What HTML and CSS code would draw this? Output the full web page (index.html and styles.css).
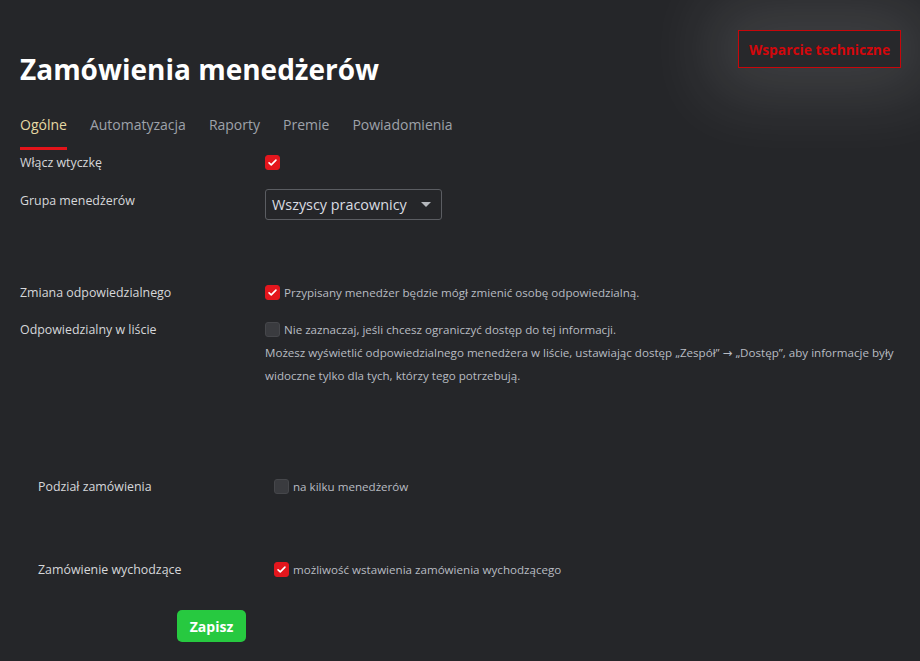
FILE: index.html
```html
<!DOCTYPE html>
<html lang="pl">
<head>
<meta charset="utf-8">
<title>Zamówienia menedżerów</title>
<link rel="stylesheet" href="styles.css">
</head>
<body>
<div class="page">
  <header class="header">
    <h1 class="title">Zamówienia menedżerów</h1>
    <a class="support" href="#">Wsparcie techniczne</a>
  </header>
  <nav class="tabs">
    <span class="tab active">Ogólne</span>
    <span class="tab">Automatyzacja</span>
    <span class="tab">Raporty</span>
    <span class="tab">Premie</span>
    <span class="tab">Powiadomienia</span>
  </nav>

  <div class="form main">
    <div class="row r1">
      <div class="label">Włącz wtyczkę</div>
      <div class="control"><span class="check on"><svg viewBox="0 0 16 16" width="11" height="11"><path d="M3 8.5l3.2 3L13 4.5" fill="none" stroke="#fff" stroke-width="2.4" stroke-linecap="round" stroke-linejoin="round"/></svg></span></div>
    </div>
    <div class="row r2">
      <div class="label">Grupa menedżerów</div>
      <div class="control"><div class="select"><span>Wszyscy pracownicy</span><span class="caret"></span></div></div>
    </div>
    <div class="row r3">
      <div class="label">Zmiana odpowiedzialnego</div>
      <div class="control desc"><label class="opt"><span class="check on"><svg viewBox="0 0 16 16" width="11" height="11"><path d="M3 8.5l3.2 3L13 4.5" fill="none" stroke="#fff" stroke-width="2.4" stroke-linecap="round" stroke-linejoin="round"/></svg></span>Przypisany menedżer będzie mógł zmienić osobę odpowiedzialną.</label></div>
    </div>
    <div class="row r4">
      <div class="label">Odpowiedzialny w liście</div>
      <div class="control desc">
        <label class="opt"><span class="check"></span>Nie zaznaczaj, jeśli chcesz ograniczyć dostęp do tej informacji.</label>
        <p class="note">Możesz wyświetlić odpowiedzialnego menedżera w liście, ustawiając dostęp „Zespół” → „Dostęp”, aby informacje były widoczne tylko dla tych, którzy tego potrzebują.</p>
      </div>
    </div>
  </div>

  <div class="form sub">
    <div class="row r5">
      <div class="label">Podział zamówienia</div>
      <div class="control desc"><label class="opt"><span class="check"></span>na kilku menedżerów</label></div>
    </div>
    <div class="row r6">
      <div class="label">Zamówienie wychodzące</div>
      <div class="control desc"><label class="opt"><span class="check on"><svg viewBox="0 0 16 16" width="11" height="11"><path d="M3 8.5l3.2 3L13 4.5" fill="none" stroke="#fff" stroke-width="2.4" stroke-linecap="round" stroke-linejoin="round"/></svg></span>możliwość wstawienia zamówienia wychodzącego</label></div>
    </div>
  </div>

  <div class="actions"><button class="save">Zapisz</button></div>
</div>
</body>
</html>
```
FILE: styles.css
```css
html, body {
  margin: 0;
  padding: 0;
  background: #252629;
  height: 100%;
}
body {
  font-family: "Open Sans", "Noto Sans", "DejaVu Sans", sans-serif;
  color: #d4d5d8;
  overflow: hidden;
}
.page {
  padding: 30px 19px 0 20px;
}
.header {
  display: flex;
  justify-content: space-between;
  align-items: flex-start;
}
.title {
  margin: 19px 0 0 0;
  font-size: 28px;
  line-height: 40px;
  font-weight: 700;
  color: #ffffff;
}
.support {
  display: flex;
  align-items: center;
  justify-content: center;
  width: 161px;
  height: 36px;
  border: 1px solid #c8060a;
  color: #d2070b;
  font-weight: 700;
  font-size: 13.8px;
  text-decoration: none;
  background: #27282b;
  box-shadow: 0 0 70px 28px rgba(255, 255, 255, 0.12);
}
.tabs {
  display: flex;
  gap: 23px;
  margin-top: 26px;
}
.tab {
  font-size: 14px;
  line-height: 20px;
  color: #9ea2aa;
  padding-bottom: 12px;
  border-bottom: 3px solid transparent;
}
.tab.active {
  color: #e5d8a3;
  border-bottom-color: #e3141a;
}
.row {
  display: flex;
  align-items: flex-start;
}
.label {
  flex: none;
  font-size: 12.4px;
  line-height: 23px;
  color: #d6d7da;
}
.main .label { width: 245px; }
.sub { padding-left: 18px; }
.sub .label { width: 236px; }
.control {
  flex: 1;
  font-size: 11.6px;
  line-height: 23px;
  color: #b8bcc2;
}
.r1 { margin-top: 1px; }
.r2 { margin-top: 15px; }
.r3 { margin-top: 61px; }
.r4 { margin-top: 14px; }
.sub { margin-top: 88px; }
.r6 { margin-top: 60px; }
.r1 .control { display: flex; align-items: center; height: 23px; }
.opt {
  display: flex;
  align-items: center;
  gap: 4px;
}
.check {
  width: 15px;
  height: 15px;
  border-radius: 3px;
  box-sizing: border-box;
  background: #3a3b3f;
  border: 1px solid #46474b;
  display: inline-flex;
  align-items: center;
  justify-content: center;
  flex: none;
}
.check.on {
  background: #e4161d;
  border-color: #e4161d;
}
.note {
  margin: 0;
}
.select {
  box-sizing: border-box;
  width: 177px;
  height: 31px;
  border: 1px solid #5b5d62;
  border-radius: 3px;
  display: flex;
  align-items: center;
  justify-content: space-between;
  padding: 0 10px 0 6px;
  font-size: 14.4px;
  color: #d9dce1;
}
.caret {
  width: 0;
  height: 0;
  border-left: 5px solid transparent;
  border-right: 5px solid transparent;
  border-top: 5px solid #b5b8bd;
}
.actions {
  margin-top: 29px;
  padding-left: 157px;
}
.save {
  width: 69px;
  height: 32px;
  border: none;
  border-radius: 5px;
  background: #27c940;
  color: #ffffff;
  font-family: "Open Sans", "Noto Sans", sans-serif;
  font-weight: 700;
  font-size: 14px;
  padding: 0;
}
```
